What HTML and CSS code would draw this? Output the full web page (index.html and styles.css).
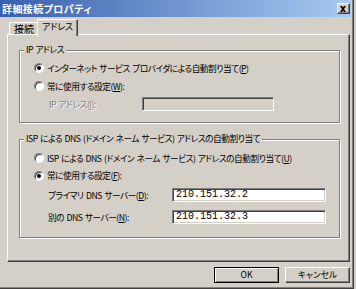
FILE: index.html
```html
<!DOCTYPE html>
<html lang="ja">
<head>
<meta charset="utf-8">
<link rel="stylesheet" href="styles.css">
</head>
<body>
<div class="window">
  <div class="titlebar">
    <span class="title">詳細接続プロパティ</span>
    <span class="close"><svg width="7" height="6" viewBox="0 0 7 6"><path d="M0 0h2l1 1.5L4 0h2v0L4 3l2 3H4L3 4.5 2 6H0l2-3z" fill="#000"/></svg></span>
  </div>
  <div class="client">
    <div class="tabs">
      <div class="tab">接続</div>
      <div class="tab sel">アドレス</div>
    </div>
    <div class="panel">
      <fieldset class="group g1">
        <legend>IP アドレス</legend>
        <div class="row r1"><span class="radio on"></span><span class="rtext">インターネット サービス プロバイダによる自動割り当て(<u>P</u>)</span></div>
        <div class="row r2"><span class="radio"></span><span class="rtext">常に使用する設定(<u>W</u>):</span></div>
        <div class="row r3"><span class="lbl lbl-ip dis">IP アドレス(<u>I</u>):</span><span class="input input-ip off"></span></div>
      </fieldset>
      <fieldset class="group g2">
        <legend>ISP による DNS (ドメイン ネーム サービス) アドレスの自動割り当て</legend>
        <div class="row d1"><span class="radio"></span><span class="rtext">ISP による DNS (ドメイン ネーム サービス) アドレスの自動割り当て(<u>U</u>)</span></div>
        <div class="row d2"><span class="radio on"></span><span class="rtext">常に使用する設定(<u>F</u>):</span></div>
        <div class="row d3"><span class="lbl lbl-dns">プライマリ DNS サーバー(<u>D</u>):</span><span class="input input-dns">210.151.32.2</span></div>
        <div class="row d4"><span class="lbl lbl-dns">別の DNS サーバー(<u>N</u>):</span><span class="input input-dns">210.151.32.3</span></div>
      </fieldset>
    </div>
    <div class="buttons">
      <span class="btn def">OK</span>
      <span class="btn">キャンセル</span>
    </div>
  </div>
</div>
</body>
</html>
```
FILE: styles.css
```css
body {
  margin: 0;
  width: 356px;
  height: 289px;
  overflow: hidden;
  background: #d4d0c8;
  font-family: "Noto Sans CJK JP", "Noto Sans", sans-serif;
  font-size: 8.7px;
  letter-spacing: -0.5px;
  word-spacing: 1px;
  font-feature-settings: "palt";
  color: #000;
  white-space: nowrap;
}

.window {
  width: 354px;
  height: 289px;
  box-sizing: border-box;
  border-right: 1px solid #404040;
  border-bottom: 1px solid #404040;
  box-shadow: inset -1px -1px #808080;
  padding: 0 2px 2px 0;
  display: flex;
  flex-direction: column;
}

.titlebar {
  height: 17px;
  flex: none;
  display: flex;
  align-items: center;
  justify-content: space-between;
  background: linear-gradient(to right, #3a5fae, #a6caf0);
  padding: 0 1px 0 2px;
}

.title {
  color: #fff;
  font-weight: bold;
  font-size: 10px;
  line-height: 17px;
  letter-spacing: 0.4px;
}

.close {
  width: 13px;
  height: 11px;
  box-sizing: border-box;
  background: #d4d0c8;
  border: 1px solid;
  border-color: #fff #404040 #404040 #fff;
  box-shadow: inset -1px -1px #808080;
  display: flex;
  align-items: center;
  justify-content: center;
}

.client {
  flex: 1;
  display: flex;
  flex-direction: column;
  padding: 0 1px 0 7px;
}

.tabs {
  height: 17px;
  display: flex;
  align-items: flex-end;
  padding-left: 2px;
}

.tab {
  width: 30px;
  height: 12px;
  box-sizing: border-box;
  border-left: 1px solid #fff;
  border-top: 1px solid #fff;
  border-right: 1px solid #404040;
  box-shadow: inset -1px 0 #808080;
  text-align: center;
  line-height: 12px;
  font-size: 10px;
  letter-spacing: 0;
}

.tab.sel {
  width: 41px;
  height: 17px;
  margin-left: -2px;
  margin-bottom: -2px;
  position: relative;
  z-index: 1;
  background: #d4d0c8;
  line-height: 14px;
  font-size: 9px;
  letter-spacing: -0.2px;
}

.panel {
  height: 228px;
  box-sizing: border-box;
  border: 1px solid;
  border-color: #fff #404040 #404040 #fff;
  box-shadow: inset -1px -1px #808080;
  padding: 9px 9px 0 11px;
}

.group {
  margin: 0;
  padding: 0;
  border: 1px solid #808080;
  box-shadow: inset 1px 1px #fff, 1px 1px #fff;
}

.group legend {
  margin-left: 4px;
  padding: 0 2px;
  line-height: 12px;
  background: #d4d0c8;
}

.g1 {
  padding: 3px 0 9px;
}

.g2 {
  margin-top: 10px;
  padding: 4px 0 11px;
}

.row {
  display: flex;
  align-items: center;
  height: 18px;
}

.d2 { height: 17px; }
.d3 { margin-top: 2px; }
.d4 { margin-top: 4px; }

.radio {
  width: 10px;
  height: 10px;
  flex: none;
  box-sizing: border-box;
  margin-left: 14px;
  margin-right: 3px;
  border: 1px solid;
  border-color: #808080 #fff #fff #808080;
  border-radius: 50%;
  background: #fff;
  box-shadow: inset 1px 1px #404040;
  display: flex;
  align-items: center;
  justify-content: center;
}

.radio.on::after {
  content: "";
  width: 4px;
  height: 4px;
  border-radius: 50%;
  background: #000;
}

.lbl {
  margin-left: 29px;
  flex: none;
}

.lbl-ip { width: 93px; }
.lbl-dns { margin-left: 28px; width: 124px; }

.dis {
  color: #808080;
  text-shadow: 1px 1px #fff;
}

.input {
  height: 14px;
  box-sizing: border-box;
  border: 1px solid;
  border-color: #808080 #fff #fff #808080;
  box-shadow: inset 1px 1px #404040, inset -1px -1px #d4d0c8;
  background: #fff;
  font-family: "Liberation Mono", "DejaVu Sans Mono", monospace;
  font-size: 10px;
  letter-spacing: 0;
  word-spacing: 0;
  line-height: 12px;
  padding-left: 3px;
}

.input-ip { width: 132px; }
.input-dns { width: 154px; }
.input.off { background: #d4d0c8; }

.buttons {
  display: flex;
  justify-content: flex-end;
  gap: 6px;
  margin-top: 5px;
}

.btn {
  width: 65px;
  height: 16px;
  box-sizing: border-box;
  border: 1px solid;
  border-color: #fff #404040 #404040 #fff;
  box-shadow: inset -1px -1px #808080;
  display: flex;
  align-items: center;
  justify-content: center;
  line-height: 12px;
  letter-spacing: 0;
}

.btn.def {
  border-color: #000;
  box-shadow: inset 1px 1px #fff, inset -1px -1px #808080;
}
```
